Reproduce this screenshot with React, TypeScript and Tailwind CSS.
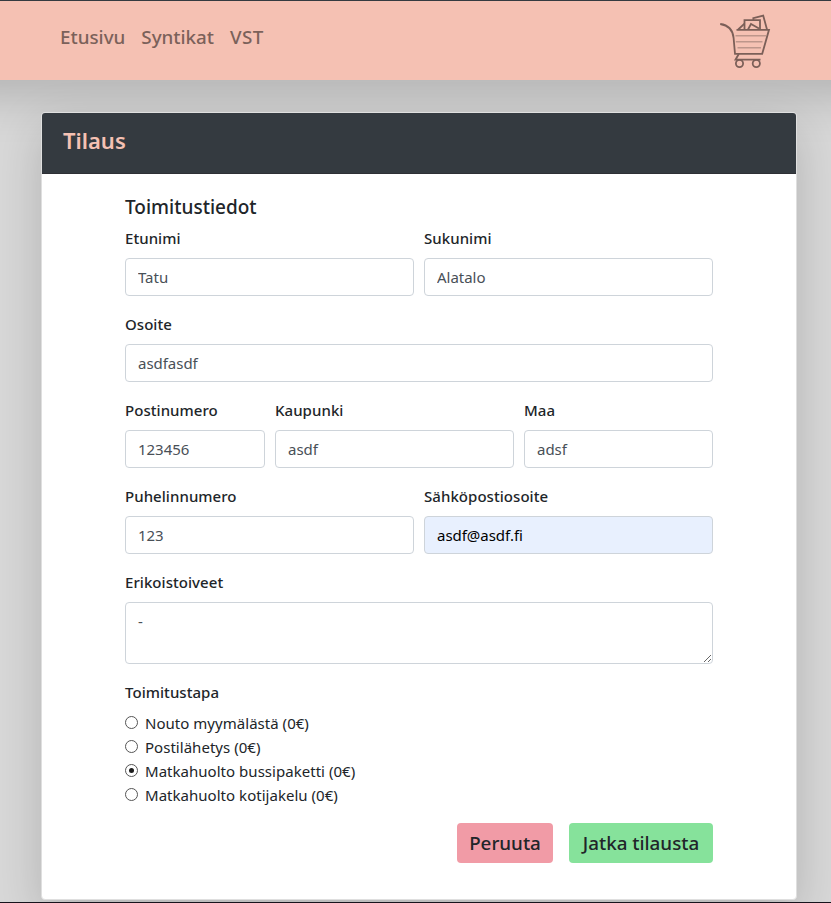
import type { ReactNode } from "react";

function Field({ label, value, width, filled }: { label: string; value: string; width: string; filled?: boolean }) {
  return (
    <div className={width}>
      <Label>{label}</Label>
      <input
        readOnly
        value={value}
        className={`mt-2 block h-[38px] w-full rounded border border-[#ced4da] px-3 text-[15px] tracking-[-0.03px] outline-none ${filled ? "bg-[#e8f0fe] text-black" : "bg-white text-[#495057]"}`}
      />
    </div>
  );
}

function Label({ children }: { children: ReactNode }) {
  return <div className="h-6 whitespace-nowrap text-[15px] font-medium leading-6 tracking-[0.05px]">{children}</div>;
}

function Cart() {
  return (
    <svg width="54" height="56" viewBox="0 0 54 56" fill="none" stroke="#7b5f58" strokeWidth="1.8" className="mt-[12px]">
      <path d="M1.2 11C8.5 12 13.8 16.5 14.6 25L16 40.8H43.2L50 16.8H17.5" />
      <path d="M25.5 16.5V7.2H41V16.5" />
      <path d="M34.5 6.8L34.3 5.2L44.2 2.6L48 16.5" />
      <path d="M19.2 16.5L25.5 10.6M29 16.5L32 11L40 15.5" />
      <path d="M19.8 41L16.5 46.7H41.5" />
      <path d="M16.5 22.7H47M16.8 28.8H43.5M18.5 34.8H42" stroke="#bd968b" strokeWidth="1.6" />
      <circle cx="20.5" cy="50.5" r="3.6" />
      <circle cx="37.3" cy="50.5" r="3.6" />
    </svg>
  );
}

const methods = ["Nouto myymälästä (0€)", "Postilähetys (0€)", "Matkahuolto bussipaketti (0€)", "Matkahuolto kotijakelu (0€)"];

export default function App() {
  return (
    <div className="flex h-[903px] w-[831px] flex-col overflow-hidden border-b border-t border-b-[#17131c] border-t-[#343a40] bg-[#d8d8d8] font-['Noto_Sans','Open_Sans',sans-serif] text-[#212529]">
      <header className="-mx-12 flex h-[79px] shrink-0 items-start justify-between bg-[#f5c1b3] pl-[108px] pr-[106px] shadow-[0_16px_48px_rgba(0,0,0,0.175)]">
        <nav className="mt-[22px] flex gap-4 text-[18.8px] font-medium leading-[28px] text-[#7b615a]">
          <a>Etusivu</a>
          <a>Syntikat</a>
          <a className="tracking-[0.4px]">VST</a>
        </nav>
        <Cart />
      </header>
      <main className="ml-[41px] mt-8 h-[788px] w-[756px] shrink-0 rounded border border-[#dfdfdf] bg-white shadow-[0_16px_48px_rgba(0,0,0,0.175)]">
        <div className="h-[61px] rounded-t-[3px] border-b border-[#2e3035] bg-[#343a40] pl-[21px] pt-[13px] text-[22px] font-semibold leading-[29px] text-[#f5c1b3]">Tilaus</div>
        <form className="ml-[83px] mt-5 w-[588px]">
          <h2 className="mb-2 h-6 text-[19px] font-medium leading-[26px]">Toimitustiedot</h2>
          <div className="flex flex-col gap-4">
            <div className="flex gap-[10px]">
              <Field label="Etunimi" value="Tatu" width="w-[289px]" />
              <Field label="Sukunimi" value="Alatalo" width="w-[289px]" />
            </div>
            <Field label="Osoite" value="asdfasdf" width="w-full" />
            <div className="flex gap-[10px]">
              <Field label="Postinumero" value="123456" width="w-[140px]" />
              <Field label="Kaupunki" value="asdf" width="w-[239px]" />
              <Field label="Maa" value="adsf" width="w-[189px]" />
            </div>
            <div className="flex gap-[10px]">
              <Field label="Puhelinnumero" value="123" width="w-[289px]" />
              <Field label="Sähköpostiosoite" value="asdf@asdf.fi" width="w-[289px]" filled />
            </div>
            <div>
              <Label>Erikoistoiveet</Label>
              <textarea readOnly value="-" className="mt-2 block h-[62px] w-full resize-y rounded border border-[#ced4da] px-3 py-[6px] text-[15px] leading-6 text-[#495057] outline-none" />
            </div>
          </div>
          <div className="mt-4">
            <Label>Toimitustapa</Label>
            <div className="mt-[7px]">
              {methods.map((method, i) => (
                <label key={method} className="flex h-6 items-center">
                  <span className="mb-[2px] mr-[7px] flex size-[13px] items-center justify-center rounded-full border border-[#555]">
                    {i === 2 && <span className="size-[5px] rounded-full bg-[#1c1c1c]" />}
                  </span>
                  <span className="whitespace-nowrap text-[15px] leading-6 tracking-[0.03px]">{method}</span>
                </label>
              ))}
            </div>
          </div>
          <div className="mt-4 flex justify-end gap-4 text-[18.8px] font-medium leading-[40px]">
            <button type="button" className="h-10 w-24 whitespace-nowrap rounded bg-[#f19ba6]">Peruuta</button>
            <button type="button" className="h-10 w-36 whitespace-nowrap rounded bg-[#86e29b]">Jatka tilausta</button>
          </div>
        </form>
      </main>
    </div>
  );
}
